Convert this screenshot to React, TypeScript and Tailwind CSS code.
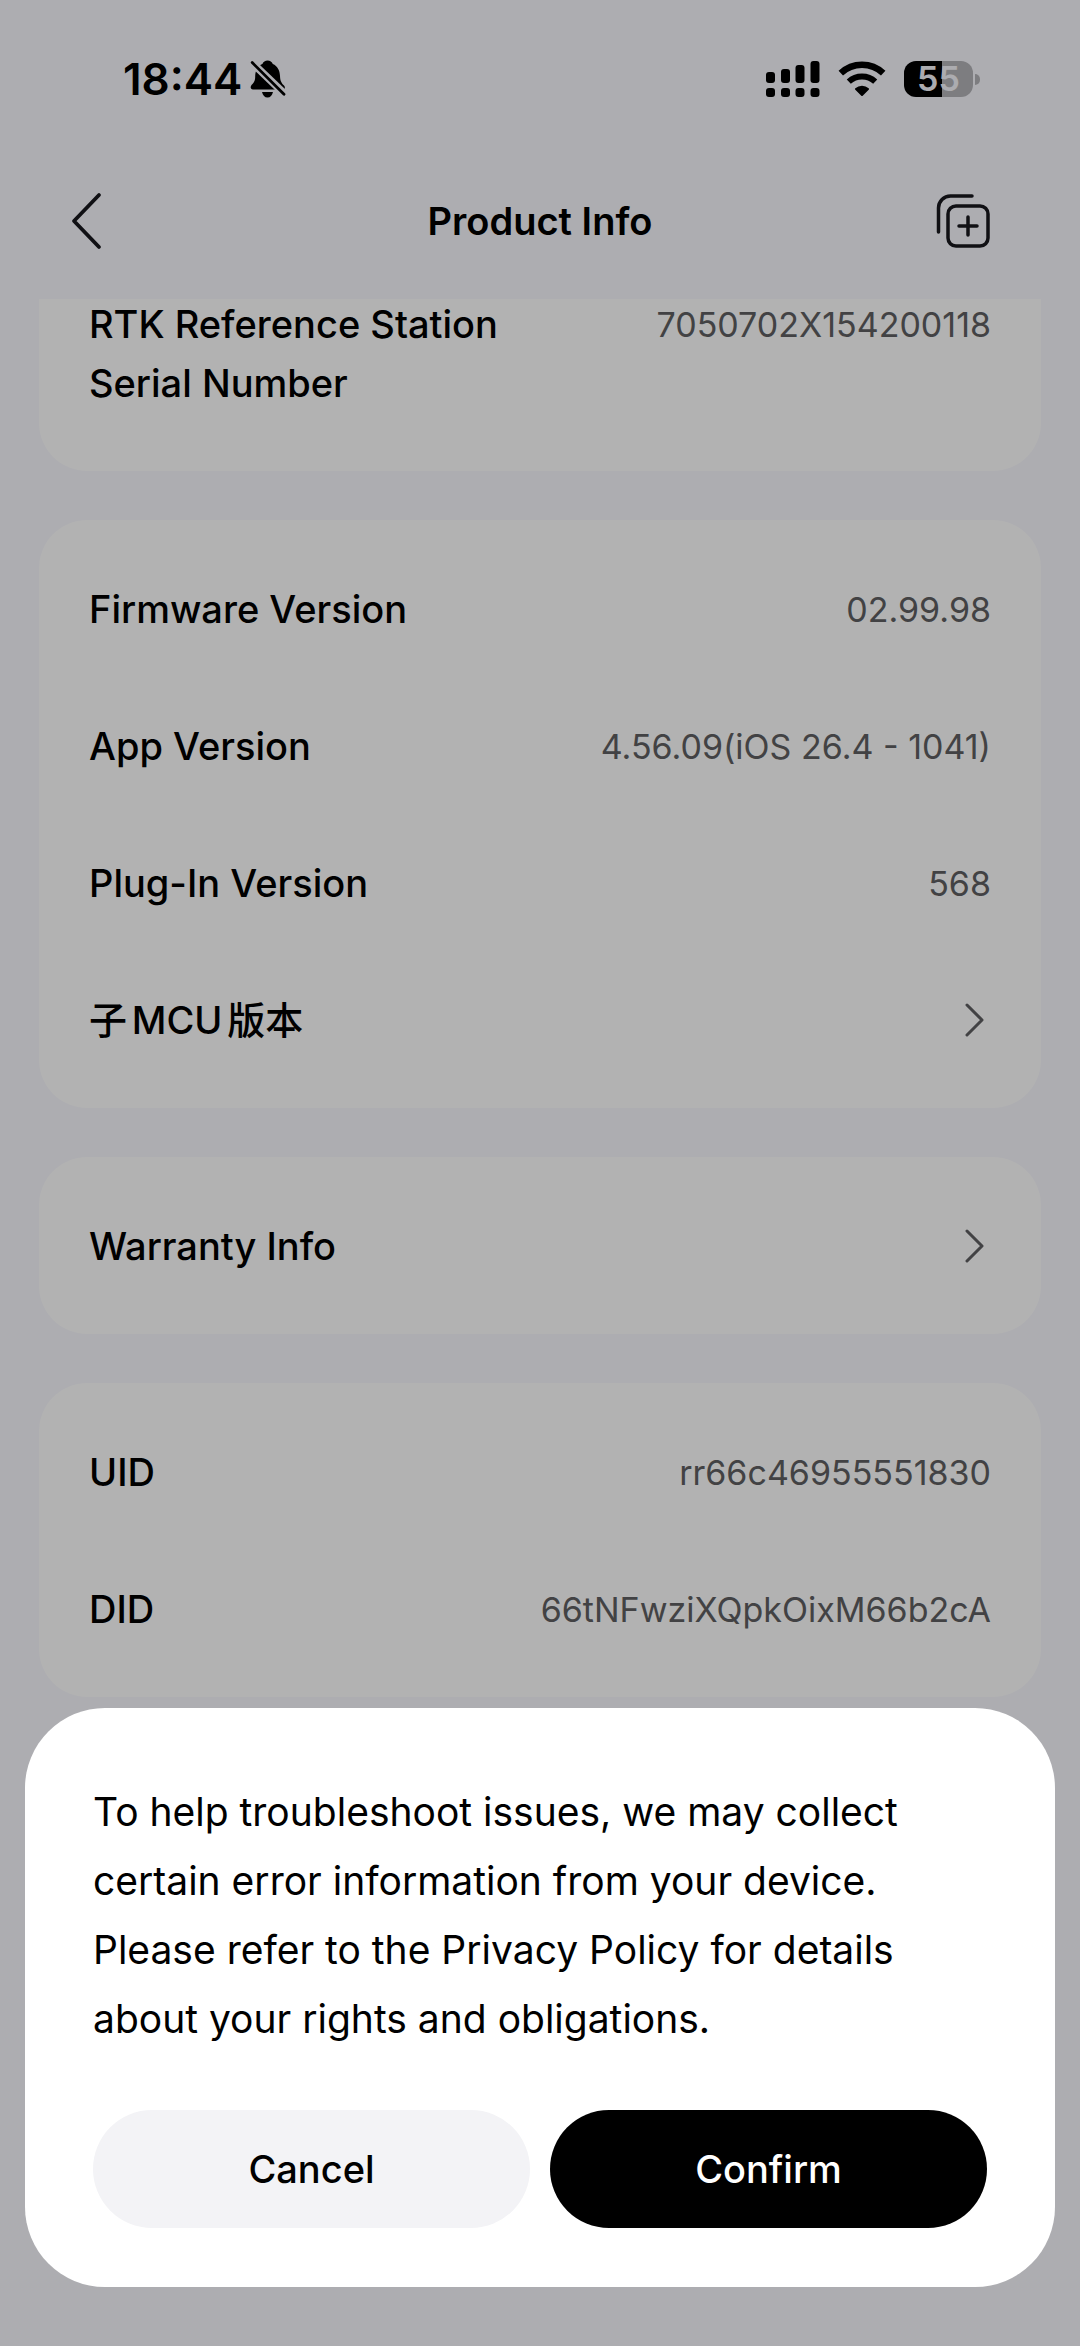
import { useState } from 'react';

const BellSlash = () => (
  <svg viewBox="0 0 36 38" className="w-9 h-[38px]" aria-hidden="true">
    <mask id="bell-cut">
      <rect width="36" height="38" fill="white" />
      <path d="M-2 -1.2L38 37.2" stroke="black" strokeWidth="7.6" />
    </mask>
    <path
      mask="url(#bell-cut)"
      d="M17.6 .5C20 .5 22 1.9 22.8 4C27.5 6 29.8 10.5 30 16C30.2 20.5 31 22.5 34 25.5C35.6 27.5 35 29.5 32.5 29.5H3C.5 29.5 0 27 1.5 25C4.6 21.8 5.2 20.5 5.2 16C5.4 10.5 7.8 6 12.4 4C13.2 1.9 15.2 .5 17.6 .5Z"
    />
    <path d="M12 32H23C22.2 35.5 20.3 37.5 17.5 37.5S12.8 35.5 12 32Z" />
    <path d="M2.2 2.6L34 34.2" stroke="black" strokeWidth="2.8" strokeLinecap="round" />
  </svg>
);

const Signal = () => (
  <svg viewBox="0 0 54 36" className="w-[54px] h-9" aria-hidden="true">
    <rect x="0" y="11" width="9" height="11" rx="3" />
    <rect x="15" y="8" width="9" height="14" rx="3" />
    <rect x="29.5" y="4" width="9" height="18" rx="3" />
    <rect x="44.5" y="0" width="9" height="22" rx="3" />
    <rect x="0" y="27" width="9" height="9" rx="3" />
    <rect x="15" y="27" width="9" height="9" rx="3" />
    <rect x="29.5" y="27" width="9" height="9" rx="3" />
    <rect x="44.5" y="27" width="9" height="9" rx="3" />
  </svg>
);

const Wifi = () => (
  <svg viewBox="0 0 48 36" className="w-12 h-9" fill="none" stroke="black" aria-hidden="true">
    <path d="M2.8 12.2A31 31 0 0 1 45.2 12.2" strokeWidth="6.5" />
    <path d="M10.8 20.6A19.5 19.5 0 0 1 37.2 20.6" strokeWidth="6" />
    <path d="M24 34L18 28A9 9 0 0 1 30 28Z" fill="black" strokeWidth="2" strokeLinejoin="round" />
  </svg>
);

const Battery = () => (
  <div className="flex items-center gap-[2px]" role="img" aria-label="Battery 55%">
    <div className="flex h-9 w-[69px] items-center justify-center rounded-[12px] bg-[linear-gradient(90deg,#000_55%,#b4b4b8_55%)] text-[34px] leading-9 font-semibold text-[#f7f7fc]">
      55
    </div>
    <div className="h-[11px] w-[5px] rounded-r-full bg-[#b4b4b8]" />
  </div>
);

const ChevronRight = () => (
  <svg viewBox="0 0 32 36" className="w-8 h-9" fill="none" stroke="#5f5f62" strokeWidth="3" strokeLinecap="round" strokeLinejoin="round" aria-hidden="true">
    <path d="M8 2L23 17L8 32" />
  </svg>
);

type InfoItem = {
  label: string;
  value?: string;
};

const groups: InfoItem[][] = [
  [{ label: 'RTK Reference Station Serial Number', value: '7050702X154200118' }],
  [
    { label: 'Firmware Version', value: '02.99.98' },
    { label: 'App Version', value: '4.56.09(iOS 26.4 - 1041)' },
    { label: 'Plug-In Version', value: '568' },
    { label: '子MCU版本' },
  ],
  [{ label: 'Warranty Info' }],
  [
    { label: 'UID', value: 'rr66c46955551830' },
    { label: 'DID', value: '66tNFwziXQpkOixM66b2cA' },
  ],
];

function InfoRow({ label, value }: InfoItem) {
  const rowClass = 'flex w-full items-start justify-between gap-12 pt-10 pb-[38px] text-left leading-[59px]';
  const name = <span className="max-w-[440px] text-[38px] font-medium [text-autospace:normal]">{label}</span>;

  if (!value) {
    return (
      <button type="button" className={rowClass}>
        {name}
        <span className="flex h-[59px] items-center">
          <ChevronRight />
        </span>
      </button>
    );
  }

  return (
    <div className={rowClass}>
      {name}
      <span className="text-[34px] text-[#5f5f62]">{value}</span>
    </div>
  );
}

export default function App() {
  const [open, setOpen] = useState(true);

  return (
    <div className="min-h-screen bg-[#f8f8fe] text-black font-['Inter','Noto_Sans_CJK_SC',sans-serif]">
      {/* Status bar */}
      <div className="flex h-[158px] items-center justify-between pr-[100px] pl-[123px]">
        <div className="flex items-center gap-2">
          <span className="text-[44px] leading-none font-semibold">18:44</span>
          <BellSlash />
        </div>
        <div className="flex items-center gap-[18px]">
          <Signal />
          <Wifi />
          <Battery />
        </div>
      </div>

      {/* Nav bar */}
      <header className="grid h-[141px] grid-cols-3 items-center px-[66px] pb-[15px]">
        <button type="button" aria-label="Back" className="justify-self-start">
          <svg viewBox="0 0 42 60" className="w-[42px] h-[60px]" fill="none" stroke="#18181d" strokeWidth="3.8" strokeLinecap="round" strokeLinejoin="round">
            <path d="M33 4L8 30L33 56" />
          </svg>
        </button>
        <h1 className="text-center text-[38px] font-semibold whitespace-nowrap">Product Info</h1>
        <button type="button" aria-label="Add copy" className="justify-self-end pr-[23px]">
          <svg viewBox="0 0 56 56" className="w-14 h-14" fill="none" stroke="#18181d" strokeWidth="3.5" strokeLinecap="round">
            <path d="M3.5 39V15A12 12 0 0 1 15.500 3H37" />
            <rect x="13" y="13" width="40" height="40" rx="8" />
            <path d="M33 24V42M24 33H42" />
          </svg>
        </button>
      </header>

      {/* List, scrolled a little under the nav bar */}
      <main className="overflow-hidden px-[39px]">
        <div className="-mt-16 flex flex-col gap-[49px]">
          {groups.map(group => (
            <section key={group[0].label} className="rounded-[48px] bg-white px-[50px] py-5">
              {group.map(item => (
                <InfoRow key={item.label} {...item} />
              ))}
            </section>
          ))}
        </div>
      </main>

      {/* Consent sheet */}
      {open && (
        <div className="fixed inset-0 flex items-end bg-black/30 px-[25px] pb-[59px]">
          <div role="dialog" aria-modal="true" aria-describedby="consent-text" className="w-full rounded-[80px] bg-white px-[68px] pt-[69px] pb-[59px]">
            <p id="consent-text" className="text-[39px] leading-[69px]">
              To help troubleshoot issues, we may collect certain error information from your device. Please refer to the Privacy Policy for details about your rights and obligations.
            </p>
            <div className="mt-[57px] grid grid-cols-2 gap-5 text-[38px] font-medium">
              <button type="button" onClick={() => setOpen(false)} className="h-[118px] rounded-full bg-[#f3f3f6]">
                Cancel
              </button>
              <button type="button" onClick={() => setOpen(false)} className="h-[118px] rounded-full bg-black text-white">
                Confirm
              </button>
            </div>
          </div>
        </div>
      )}
    </div>
  );
}
